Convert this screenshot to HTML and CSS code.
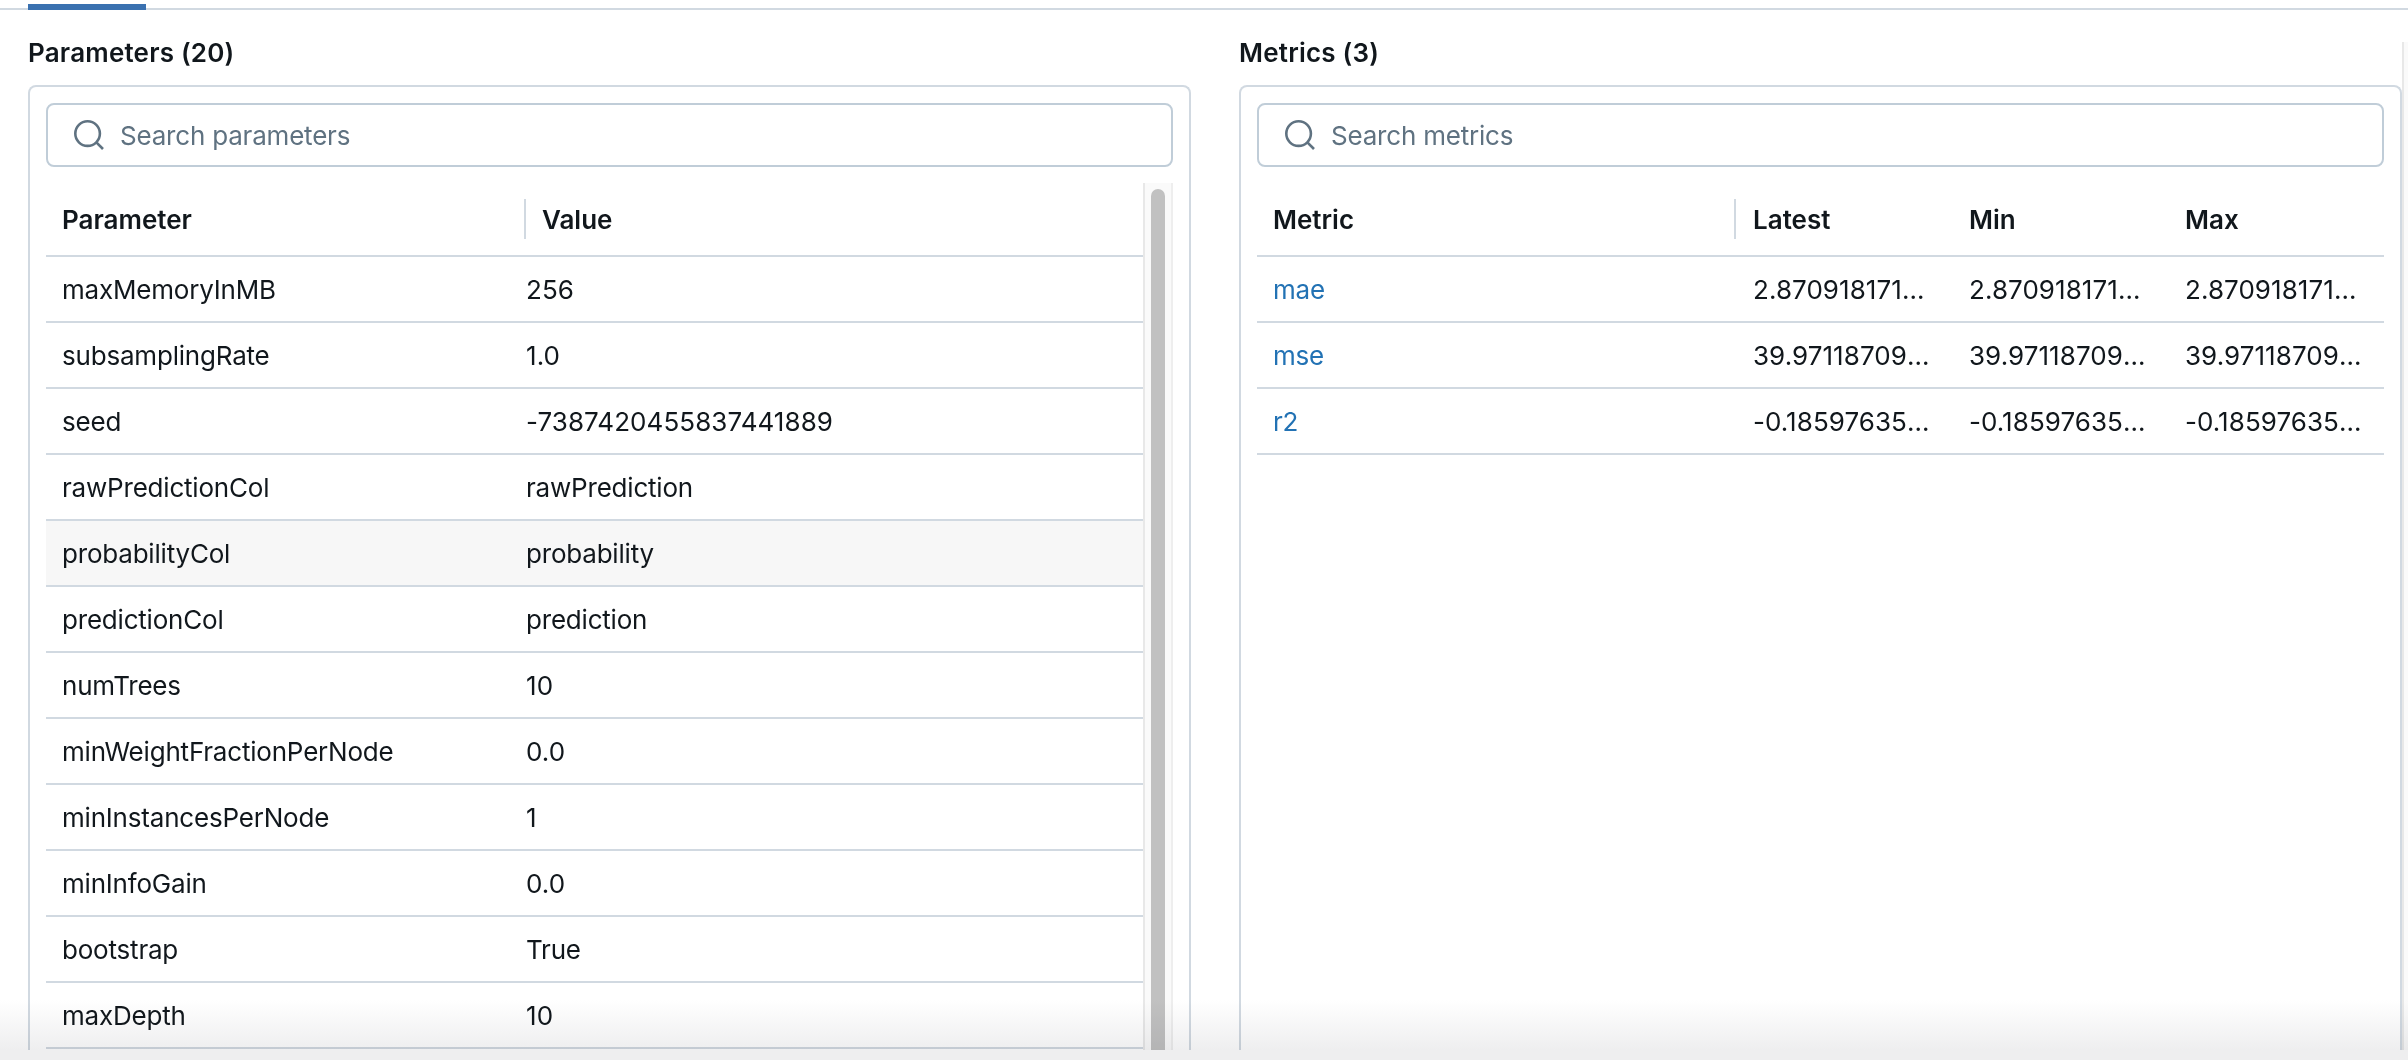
FILE: index.html
```html
<!DOCTYPE html>
<html lang="en">
<head>
  <meta charset="UTF-8">
  <title>Run details</title>
  <link rel="stylesheet" href="styles.css">
</head>
<body>

  <!-- Tab bar, only the active underline is in view -->
  <div class="tabs"><div class="tab-active"></div></div>

  <div class="page">
    <div class="content">

      <!-- Parameters -->
      <section class="column">
        <h2>Parameters (20)</h2>
        <div class="panel">
          <label class="search">
            <svg class="search-icon" viewBox="0 0 30 30" fill="none" stroke="#5f7281" stroke-width="2.6">
              <circle cx="13.6" cy="13.6" r="12.3"/>
              <path d="M22.6 22.6l6.4 6.4"/>
            </svg>
            <input type="text" placeholder="Search parameters">
          </label>
          <div class="table-wrap">
            <table class="params">
              <thead>
                <tr>
                  <th class="col-name"><div class="th-inner th-split">Parameter</div></th>
                  <th><div class="th-inner">Value</div></th>
                </tr>
              </thead>
              <tbody>
                <tr><td>maxMemoryInMB</td><td class="num">256</td></tr>
                <tr><td>subsamplingRate</td><td class="num">1.0</td></tr>
                <tr><td>seed</td><td class="num">-7387420455837441889</td></tr>
                <tr><td>rawPredictionCol</td><td>rawPrediction</td></tr>
                <tr class="hover"><td>probabilityCol</td><td>probability</td></tr>
                <tr><td>predictionCol</td><td>prediction</td></tr>
                <tr><td>numTrees</td><td class="num">10</td></tr>
                <tr><td>minWeightFractionPerNode</td><td class="num">0.0</td></tr>
                <tr><td>minInstancesPerNode</td><td class="num">1</td></tr>
                <tr><td>minInfoGain</td><td class="num">0.0</td></tr>
                <tr><td>bootstrap</td><td>True</td></tr>
                <tr><td>maxDepth</td><td class="num">10</td></tr>
              </tbody>
            </table>
            <div class="scrollbar"><div class="thumb"></div></div>
          </div>
        </div>
      </section>

      <!-- Metrics -->
      <section class="column">
        <h2>Metrics (3)</h2>
        <div class="panel">
          <label class="search">
            <svg class="search-icon" viewBox="0 0 30 30" fill="none" stroke="#5f7281" stroke-width="2.6">
              <circle cx="13.6" cy="13.6" r="12.3"/>
              <path d="M22.6 22.6l6.4 6.4"/>
            </svg>
            <input type="text" placeholder="Search metrics">
          </label>
          <div class="table-wrap">
            <table class="metrics">
              <thead>
                <tr>
                  <th class="col-metric"><div class="th-inner th-split">Metric</div></th>
                  <th class="col-num"><div class="th-inner">Latest</div></th>
                  <th class="col-num"><div class="th-inner">Min</div></th>
                  <th class="col-num"><div class="th-inner">Max</div></th>
                </tr>
              </thead>
              <tbody>
                <tr>
                  <td><a href="#">mae</a></td>
                  <td class="num">2.870918171343</td>
                  <td class="num">2.870918171343</td>
                  <td class="num">2.870918171343</td>
                </tr>
                <tr>
                  <td><a href="#">mse</a></td>
                  <td class="num">39.97118709312</td>
                  <td class="num">39.97118709312</td>
                  <td class="num">39.97118709312</td>
                </tr>
                <tr>
                  <td><a href="#">r2</a></td>
                  <td class="num">-0.185976351204</td>
                  <td class="num">-0.185976351204</td>
                  <td class="num">-0.185976351204</td>
                </tr>
              </tbody>
            </table>
          </div>
        </div>
      </section>

    </div>
    <div class="page-scrollbar"></div>
  </div>

  <div class="bottom-fade"></div>

</body>
</html>
```

FILE: styles.css
```css
html, body {
  margin: 0;
  height: 1060px;
  overflow: hidden;
  background: #fff;
}
body {
  font-family: Inter, "Noto Sans", sans-serif;
  font-size: 26px;
  color: #11171c;
}

.tabs {
  height: 10px;
  padding-left: 28px;
  box-sizing: border-box;
  background: linear-gradient(to bottom, #fff 8px, #d1d9e1 8px);
}
.tab-active {
  width: 118px;
  height: 6px;
  margin-top: 4px;
  float: left;
  background: #3a71b0;
}

.page {
  display: flex;
  height: 1040px;
  overflow: hidden;
}
.content {
  flex: 1;
  display: flex;
  gap: 48px;
  padding-left: 28px;
}
.column {
  width: 1163px;
  flex: none;
  display: flex;
  flex-direction: column;
}
h2 {
  margin: 27px 0 16px;
  font-size: 26px;
  line-height: 32px;
  font-weight: 600;
  letter-spacing: 0.2px;
}

.panel {
  flex: 1;
  min-height: 0;
  box-sizing: border-box;
  padding: 16px 16px 0;
  border: 2px solid #d1d9e1;
  border-bottom: 0;
  border-radius: 8px 8px 0 0;
}

.search {
  display: flex;
  align-items: center;
  gap: 16px;
  height: 64px;
  box-sizing: border-box;
  padding-left: 26px;
  border: 2px solid #c0cdd8;
  border-radius: 8px;
}
.search-icon {
  width: 30px;
  height: 30px;
  flex: none;
}
.search input {
  flex: 1;
  min-width: 0;
  border: 0;
  outline: 0;
  padding: 0;
  font: inherit;
  letter-spacing: -0.2px;
  color: inherit;
  background: transparent;
}
.search input::placeholder {
  color: #5f7281;
  opacity: 1;
}

.table-wrap {
  display: flex;
  margin-top: 16px;
  height: 900px;
}

table {
  border-collapse: collapse;
  table-layout: fixed;
  height: 0;
}
.params {
  width: 1097px;
}
.metrics {
  width: 1127px;
}
.col-name {
  width: 480px;
}
.col-metric {
  width: 479px;
}
.col-num {
  width: 216px;
}

th {
  height: 72px;
  padding: 16px 0;
  box-sizing: border-box;
  text-align: left;
  font-weight: 600;
  border-bottom: 2px solid #d1d9e1;
}
.th-inner {
  display: flex;
  align-items: center;
  height: 40px;
  padding-left: 16px;
}
.th-split {
  border-right: 2px solid #d1d9e1;
}
.col-num .th-inner {
  padding-left: 17px;
}
td {
  height: 66px;
  padding: 0 16px;
  box-sizing: border-box;
  border-bottom: 2px solid #d1d9e1;
  white-space: nowrap;
  overflow: hidden;
  text-overflow: ellipsis;
  letter-spacing: -0.2px;
}
td.num {
  letter-spacing: 0.06px;
}
.metrics td.num {
  padding: 0 15px 0 17px;
}
.params td + td {
  padding-left: 0;
}
.hover td {
  background: #f7f7f7;
}
a {
  color: #2272b4;
  text-decoration: none;
}

.scrollbar {
  width: 30px;
  flex: none;
  box-sizing: border-box;
  padding: 6px 6px 0;
  background: #fafafa;
  border-left: 2px solid #e8e8e8;
  border-right: 2px solid #eee;
}
.thumb {
  height: 100%;
  background: #c1c1c1;
  border-radius: 8px;
}

.page-scrollbar {
  width: 6px;
  flex: none;
  box-sizing: border-box;
  margin-top: 32px;
  background: #fafafa;
  border-left: 2px solid #e8e8e8;
}

/* fade at the bottom of the window, only darkens what is under it */
.bottom-fade {
  position: absolute;
  left: 0;
  right: 0;
  bottom: 0;
  height: 60px;
  background: linear-gradient(to bottom, #fff, #eeeeef 84%);
  mix-blend-mode: multiply;
}
```
